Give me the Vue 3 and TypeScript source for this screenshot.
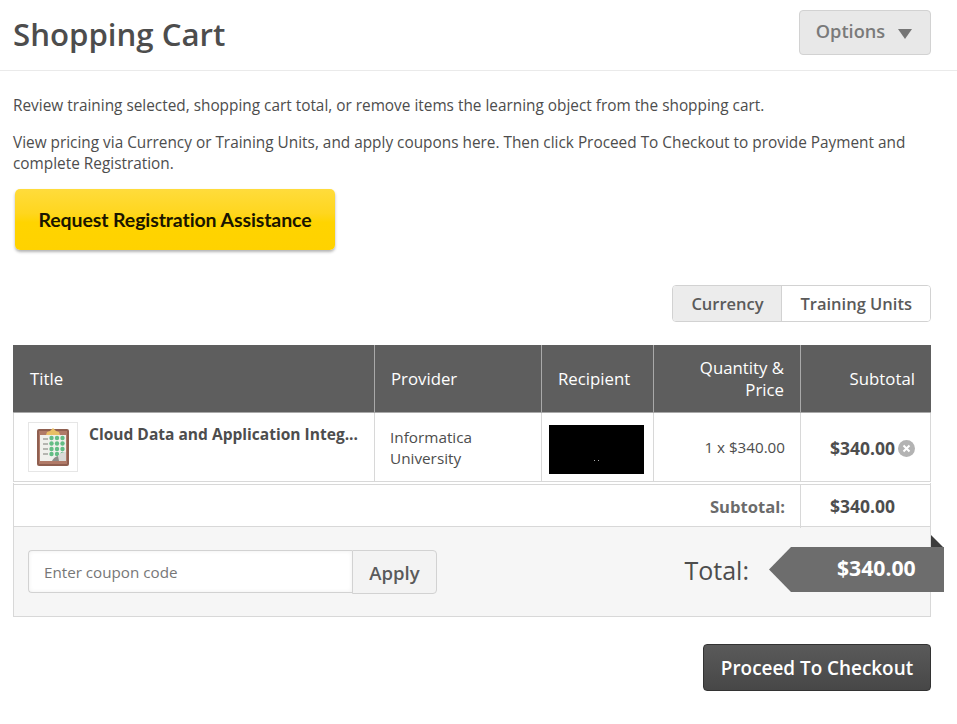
<template>
  <div class="page">
    <header class="page-head">
      <h1>Shopping Cart</h1>
      <button class="options-btn" type="button">
        Options
        <span class="caret"></span>
      </button>
    </header>

    <main class="content">
      <p class="intro first">Review training selected, shopping cart total, or remove items the learning object from the shopping cart.</p>
      <p class="intro">View pricing via Currency or Training Units, and apply coupons here. Then click Proceed To Checkout to provide Payment and complete Registration.</p>

      <a class="assist-btn">Request Registration Assistance</a>

      <div class="toggle-row">
        <div class="toggle">
          <button class="toggle-item active" type="button">Currency</button>
          <button class="toggle-item" type="button">Training Units</button>
        </div>
      </div>

      <section class="cart">
        <div class="grid-row head-row">
          <div class="cell">Title</div>
          <div class="cell">Provider</div>
          <div class="cell">Recipient</div>
          <div class="cell right">Quantity &amp; Price</div>
          <div class="cell right">Subtotal</div>
        </div>

        <div class="grid-row item-row">
          <div class="cell title-cell">
            <div class="thumb">
              <svg width="34" height="40" viewBox="0 0 34 40">
                <rect x="1" y="2" width="32" height="37" rx="2" fill="#8f5f50" />
                <rect x="3" y="4" width="28" height="33" fill="#b07a68" />
                <rect x="4" y="8" width="26" height="26" fill="#f0f0ec" />
                <path d="M11 5 L14 4 L17 1 L20 4 L23 5 L24 8 L10 8 Z" fill="#e8bf66" />
                <g fill="#b5b5b0">
                  <rect v-for="y in listRows" :key="y" x="7" :y="y" width="5" height="2" />
                </g>
                <g fill="#63bd85">
                  <template v-for="y in dotRows" :key="y">
                    <circle v-for="x in dotCols" :key="x" :cx="x" :cy="y" r="2.2" />
                  </template>
                </g>
                <path d="M16 34 L30 34 L30 25 Q24 25 22 29 Q18 30 16 34 Z" fill="#dadad7" />
                <path d="M16 34 Q18 30 22 29 L23 34 Z" fill="#8d8d8a" />
              </svg>
            </div>
            <span class="course-name">Cloud Data and Application Integ...</span>
          </div>
          <div class="cell provider-cell">Informatica University</div>
          <div class="cell recipient-cell">
            <div class="redacted"><i></i><i></i></div>
          </div>
          <div class="cell right qty-cell">1 x $340.00</div>
          <div class="cell price-cell">
            <strong>$340.00</strong>
            <svg class="remove" width="17" height="17" viewBox="0 0 17 17">
              <circle cx="8.5" cy="8.5" r="8.5" fill="#b3b3b3" />
              <path d="M5.5 5.5 L11.5 11.5 M11.5 5.5 L5.5 11.5" stroke="#fff" stroke-width="2" />
            </svg>
          </div>
        </div>

        <div class="grid-row sub-row">
          <div class="sub-label">Subtotal:</div>
          <div class="sub-value">$340.00</div>
        </div>

        <div class="total-panel">
          <div class="coupon">
            <input class="coupon-input" type="text" placeholder="Enter coupon code" />
            <button class="apply-btn" type="button">Apply</button>
          </div>
          <div class="total">
            <span class="total-label">Total:</span>
            <div class="total-tag">$340.00</div>
          </div>
        </div>
      </section>

      <div class="checkout-row">
        <button class="checkout-btn" type="button">Proceed To Checkout</button>
      </div>
    </main>
  </div>
</template>

<script setup lang="ts">
const listRows: number[] = [11, 16, 21, 26];
const dotRows: number[] = [11, 16.5, 22, 27];
const dotCols: number[] = [15.5, 21, 26.5];
</script>

<style scoped>
.page {
  width: 957px;
  height: 724px;
  overflow: hidden;
  background: #fff;
  color: #4d4d4d;
  font-family: "Open Sans", "Liberation Sans", sans-serif;
  font-size: 15.3px;
  box-sizing: border-box;
}

.page-head {
  height: 71px;
  box-sizing: border-box;
  border-bottom: 1px solid #eaeaea;
  padding: 10px 26px 0 13px;
  display: flex;
  justify-content: space-between;
  align-items: flex-start;
}

h1 {
  margin: -1px 0 0;
  font-size: 31.2px;
  font-weight: 600;
  line-height: 50px;
  color: #4d4d4d;
}

.options-btn {
  width: 132px;
  height: 45px;
  display: flex;
  align-items: center;
  justify-content: center;
  gap: 13px;
  border: 1px solid #d2d2d2;
  border-radius: 4px;
  background: #e8e8e8;
  color: #7a7a7a;
  font: 600 18.2px "Open Sans", sans-serif;
  padding: 0 2px 4px 0;
}

.caret {
  width: 0;
  height: 0;
  margin-top: 6px;
  border-left: 7px solid transparent;
  border-right: 7px solid transparent;
  border-top: 10px solid #757575;
}

.content {
  padding: 0 26px 0 13px;
}

.intro {
  margin: 0 0 15px;
  font-size: 15.36px;
  line-height: 21px;
  color: #4d4d4d;
}

.intro.first {
  margin: 24px 0 16px;
}

.assist-btn {
  display: block;
  width: 320px;
  height: 61px;
  margin: 14px 0 0 2px;
  border-radius: 5px;
  background: linear-gradient(#ffdc3c 0%, #ffd61e 40%, #ffd400 55%, #ffd200 100%);
  box-shadow: 0 2px 3px rgba(0, 0, 0, 0.3);
  color: #1a1500;
  font: 700 19.5px/61px "Lato", sans-serif;
  letter-spacing: -0.1px;
  text-align: center;
}

.toggle-row {
  display: flex;
  justify-content: flex-end;
  margin-top: 35px;
}

.toggle {
  display: flex;
  height: 37px;
  box-sizing: border-box;
  border: 1px solid #d2d2d2;
  border-radius: 4px;
  overflow: hidden;
}

.toggle-item {
  border: 0;
  background: #fff;
  color: #5a5a5a;
  font: 600 16.5px "Open Sans", sans-serif;
  padding: 0 18px;
}

.toggle-item.active {
  width: 109px;
  padding: 0;
  background: #ececec;
  border-right: 1px solid #d2d2d2;
}

.cart {
  margin-top: 23px;
  width: 918px;
}

.grid-row {
  display: grid;
  grid-template-columns: 362px 167px 112px 147px 130px;
}

.head-row {
  height: 68px;
  background: #5e5e5e;
  color: #fff;
  font-size: 16.8px;
  line-height: 22px;
  border-bottom: 1px solid #a9a9a9;
  box-sizing: border-box;
}

.head-row .cell {
  display: flex;
  align-items: center;
  padding: 0 16px;
  border-right: 1px solid #a9a9a9;
}

.head-row .cell:first-child {
  padding-left: 17px;
}

.head-row .cell:last-child {
  border-right: 0;
}

.head-row .cell.right {
  justify-content: flex-end;
  text-align: right;
}

.item-row {
  height: 68px;
  box-sizing: border-box;
  grid-template-columns: 361px 167px 112px 147px 129px;
  border-left: 1px solid #d8d8d8;
  border-right: 1px solid #d8d8d8;
}

.item-row .cell {
  border-right: 1px solid #d8d8d8;
  box-sizing: border-box;
}

.item-row .cell:last-child {
  border-right: 0;
}

.title-cell {
  display: flex;
  align-items: flex-start;
  gap: 11px;
  padding: 9px 0 0 14px;
}

.thumb {
  width: 50px;
  height: 50px;
  flex: none;
  box-sizing: border-box;
  border: 1px solid #e6e6e6;
  display: flex;
  align-items: center;
  justify-content: center;
}

.course-name {
  font-size: 15.55px;
  font-weight: 700;
  line-height: 24px;
  white-space: nowrap;
}

.provider-cell {
  padding: 14px 30px 0 15px;
  line-height: 21px;
}

.recipient-cell {
  display: flex;
  padding: 12px 0 0 7px;
}

.redacted {
  width: 95px;
  height: 49px;
  background: #000;
  display: flex;
  gap: 3px;
  justify-content: center;
  align-items: flex-end;
  padding-bottom: 13px;
  box-sizing: border-box;
}

.redacted i {
  width: 1px;
  height: 1px;
  background: #aaa;
}

.qty-cell {
  padding: 24px 15px 0 0;
  font-size: 15.2px;
  text-align: right;
  line-height: 21px;
}

.price-cell {
  display: flex;
  align-items: center;
  gap: 3px;
  padding: 2px 0 0 29px;
}

.price-cell strong,
.sub-value {
  font-size: 17.5px;
  font-weight: 700;
  color: #4d4d4d;
}

.sub-row {
  height: 45px;
  box-sizing: border-box;
  border: 1px solid #d8d8d8;
  border-top: 4px double #d8d8d8;
  border-bottom: 0;
  grid-template-columns: 787px 129px;
}

.sub-label {
  border-right: 1px solid #d8d8d8;
  text-align: right;
  padding-right: 15px;
  font-size: 16.6px;
  font-weight: 700;
  color: #6b6b6b;
  line-height: 43px;
}

.sub-value {
  padding-left: 29px;
  line-height: 42px;
}

.total-panel {
  height: 91px;
  box-sizing: border-box;
  background: #f6f6f6;
  border: 1px solid #d8d8d8;
  display: flex;
  justify-content: space-between;
  padding: 23px 0 0 14px;
}

.coupon {
  display: flex;
  height: 44px;
}

.coupon-input {
  width: 324px;
  height: 43px;
  box-sizing: border-box;
  border: 1px solid #d2d2d2;
  border-right: 0;
  border-radius: 4px 0 0 4px;
  background: #fff;
  box-shadow: inset 0 0 4px #eeeeee;
  padding: 0 15px;
  font: 400 15.2px "Open Sans", sans-serif;
  color: #4d4d4d;
}

.coupon-input::placeholder {
  color: #777;
  opacity: 1;
}

.apply-btn {
  width: 85px;
  height: 44px;
  box-sizing: border-box;
  border: 1px solid #d2d2d2;
  border-radius: 0 4px 4px 0;
  background: #f3f3f3;
  color: #5a5a5a;
  font: 600 18.5px "Open Sans", sans-serif;
}

.total {
  display: flex;
  align-items: flex-start;
  margin-right: -14px;
  position: relative;
}

.total-label {
  font-size: 25px;
  font-weight: 500;
  line-height: 40px;
  margin-right: 20px;
  color: #4d4d4d;
}

.total-tag {
  width: 175px;
  height: 45px;
  box-sizing: border-box;
  margin-top: -3px;
  padding-left: 68px;
  background: #6d6d6d;
  clip-path: polygon(22px 0, 100% 0, 100% 100%, 22px 100%, 0 50%);
  color: #fff;
  font-size: 21.2px;
  font-weight: 700;
  line-height: 42px;
}

.total::after {
  content: "";
  position: absolute;
  right: 0;
  top: -15px;
  width: 0;
  height: 0;
  border-bottom: 12px solid #3c3c3c;
  border-right: 12px solid transparent;
  margin-right: 1px;
}

.checkout-row {
  display: flex;
  justify-content: flex-end;
  margin-top: 27px;
}

.checkout-btn {
  width: 228px;
  height: 47px;
  border: 1px solid #333;
  border-radius: 4px;
  background: linear-gradient(#5a5a5a, #474747);
  color: #fff;
  font: 600 18.9px "Open Sans", sans-serif;
}
</style>

<style>
html, body {
  margin: 0;
  background: #fff;
}
</style>
